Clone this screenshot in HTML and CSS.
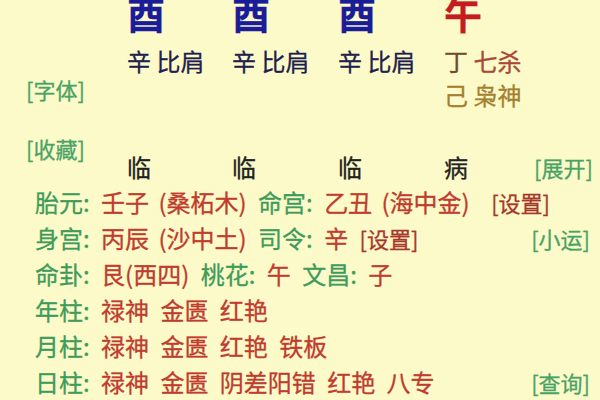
FILE: index.html
```html
<!DOCTYPE html>
<html lang="zh-CN">
<head>
  <meta charset="UTF-8">
  <meta name="viewport" content="width=device-width, initial-scale=1.0">
  <title>八字排盘</title>
<link rel="stylesheet" href="styles.css">
</head>
<body>
  <div class="chart">
    <div></div>
    <div class="branch metal">酉</div>
    <div class="branch metal">酉</div>
    <div class="branch metal">酉</div>
    <div class="branch fire">午</div>
    <div></div>

    <div></div>
    <div class="hidden navy">辛 比肩</div>
    <div class="hidden navy">辛 比肩</div>
    <div class="hidden navy">辛 比肩</div>
    <div class="hidden"><span class="brown">丁</span> <span class="rust">七杀</span></div>
    <div></div>

    <div class="link left font-link">[字体]</div>
    <div></div>
    <div></div>
    <div></div>
    <div class="hidden olive">己 枭神</div>
    <div></div>

    <div class="link left fav">[收藏]</div>
    <div class="stage">临</div>
    <div class="stage">临</div>
    <div class="stage">临</div>
    <div class="stage">病</div>
    <div class="link right stage-link">[展开]</div>
  </div>

  <div class="info">
    <div class="row">
      <div><span class="key">胎元:</span> <span class="val tight">壬子 (桑柘木)</span> <span class="key">命宫:</span> <span class="val tight">乙丑 (海中金)</span> <span class="set wide">[设置]</span></div>
    </div>
    <div class="row">
      <div><span class="key">身宫:</span> <span class="val tight">丙辰 (沙中土)</span> <span class="key">司令:</span> <span class="val">辛</span> <span class="set">[设置]</span></div>
      <span class="link">[小运]</span>
    </div>
    <div class="row">
      <div><span class="key">命卦:</span> <span class="val">艮(西四)</span> <span class="key">桃花:</span> <span class="val">午</span> <span class="key">文昌:</span> <span class="val">子</span></div>
    </div>
    <div class="row">
      <div><span class="key">年柱:</span> <span class="val">禄神 金匮 红艳</span></div>
    </div>
    <div class="row">
      <div><span class="key">月柱:</span> <span class="val">禄神 金匮 红艳 铁板</span></div>
    </div>
    <div class="row">
      <div><span class="key">日柱:</span> <span class="val">禄神 金匮 阴差阳错 红艳 八专</span></div>
      <span class="link">[查询]</span>
    </div>
  </div>
</body>
</html>
```

FILE: styles.css
```css
html, body {
  margin: 0;
  padding: 0;
}

body {
  width: 600px;
  height: 400px;
  overflow: hidden;
  background-color: #fcfac9;
  font-family: "Noto Sans CJK SC", "Noto Sans", sans-serif;
  font-size: 24px;
  color: #222;
  -webkit-text-stroke: 0.3px;
}

.chart {
  display: grid;
  grid-template-columns: 127px 105px 106px 106px 90px 1fr;
  grid-template-rows: 51px 34px 34px 72px;
  margin-top: -7px;
  padding-right: 10px;
  white-space: nowrap;
}

.branch {
  font-size: 38px;
  font-weight: bold;
  line-height: 40px;
}

.metal {
  color: #1b1c98;
}

.fire {
  color: #c41d1f;
}

.hidden {
  line-height: 34px;
}

.navy {
  color: #1e1f4e;
}

.brown {
  color: #6f4a2e;
}

.rust {
  color: #a9463b;
}

.olive {
  color: #a3802f;
}

.link {
  font-size: 22px;
  line-height: 26px;
  color: #4aa366;
}

.left {
  padding-left: 26px;
}

.right {
  justify-self: end;
}

.font-link {
  align-self: start;
  margin-top: -2px;
}

.fav {
  align-self: end;
  margin-bottom: 23px;
}

.stage {
  align-self: end;
  line-height: 34px;
  color: #222;
}

.stage-link {
  align-self: end;
  line-height: 34px;
}

.info {
  padding: 0 10px 0 35px;
  white-space: nowrap;
}

.row {
  display: flex;
  justify-content: space-between;
  align-items: center;
  line-height: 36px;
  height: 36px;
  word-spacing: 6px;
}

.key {
  color: #3f9b5a;
}

.val {
  color: #bf3c2f;
}

.tight {
  word-spacing: 4px;
}

.set {
  font-size: 22px;
  color: #a5372b;
}

.wide {
  margin-left: 10px;
}
```
